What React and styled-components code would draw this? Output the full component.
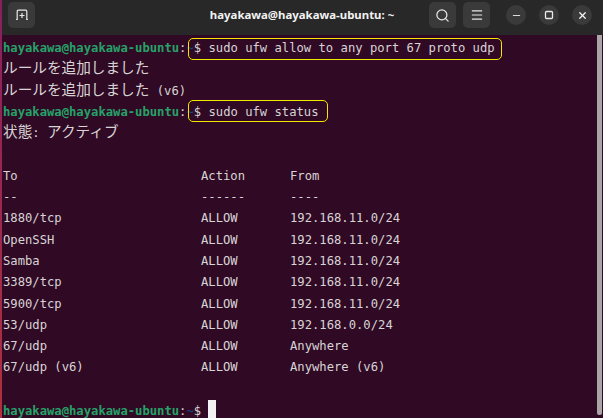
import React from 'react';
import styled, { createGlobalStyle } from 'styled-components';
import { Search, Menu, Minus, X } from 'lucide-react';

const GlobalStyle = createGlobalStyle`
  html, body {
    margin: 0;
    padding: 0;
    background: #ffffff;
  }
`

const Win = styled.div`
  display: flex;
  width: 603px;
  height: 418px;
  overflow: hidden;
  background: #300a24;
`

const Edge = styled.div`
  width: 2px;
  flex-shrink: 0;
  background: linear-gradient(#86205f, #b0303c);
`

const Main = styled.div`
  display: flex;
  flex-direction: column;
  flex: 1;
  min-width: 0;
`

const TitleBar = styled.div`
  display: grid;
  grid-template-columns: 1fr auto 1fr;
  align-items: start;
  height: 35px;
  flex-shrink: 0;
  box-sizing: border-box;
  padding: 2px 11px 0 6px;
  background: #282828;
  color: #f2f2f2;
`

const Group = styled.div`
  display: flex;
  align-items: center;
  justify-content: ${props => props.end ? 'flex-end' : 'flex-start'};
  gap: ${props => props.gap || 0}px;
  margin-right: ${props => props.after || 0}px;
`

const HeadButton = styled.div`
  display: flex;
  align-items: center;
  justify-content: center;
  width: 27px;
  height: 26px;
  border-radius: 5px;
  background: #3a3a3a;
`

const RoundButton = styled.div`
  display: flex;
  align-items: center;
  justify-content: center;
  width: 20px;
  height: 20px;
  border-radius: 50%;
  background: #3a3a3a;
`

const Title = styled.div`
  margin-left: 4px;
  font: bold 11.4px/26px "Noto Sans", "Liberation Sans", sans-serif;
`

const Body = styled.div`
  display: flex;
  flex: 1;
  min-height: 0;
`

const Screen = styled.div`
  flex: 1;
  padding: 3px 0 0 1px;
  font: 12.2px/21.3px "DejaVu Sans Mono", "Noto Sans CJK JP", monospace;
  color: #d8d4d6;
  white-space: pre;
`

const Line = styled.div`
  height: 21.3px;
`

const Jp = styled.span`
  font-family: "Noto Sans CJK JP", sans-serif;
  font-size: 14.65px;
  line-height: 0;
`

const User = styled.span`
  font-weight: bold;
  color: #26a269;
`

const Tilde = styled.span`
  color: #12488b;
`

const Mark = styled.span`
  position: relative;
  display: inline-block;
  height: 21.3px;

  &::after {
    content: "";
    position: absolute;
    left: 2px;
    right: ${props => props.tail}px;
    top: ${props => props.lift}px;
    height: 22px;
    box-sizing: border-box;
    border: 1.3px solid #f5e800;
    border-radius: 5px;
  }
`

const Cursor = styled.span`
  display: inline-block;
  width: 8px;
  height: 21px;
  margin-left: 7px;
  background: #f2f2f2;
  vertical-align: -6px;
`

const Row = styled.div`
  display: grid;
  grid-template-columns: 198px 89px 1fr;
  height: 21.3px;
`

const Scrollbar = styled.div`
  width: 6px;
  flex-shrink: 0;
  padding-bottom: 3px;
  box-sizing: border-box;
`

const Thumb = styled.div`
  width: 5px;
  height: 100%;
  background: #aaa6a8;
  border-radius: 0 0 2px 2px;
`

const Prompt = ({ children }) => (
  <Line>
    <User>hayakawa@hayakawa-ubuntu</User>:{children}
  </Line>
)

const rules = [
  ['To', 'Action', 'From'],
  ['--', '------', '----'],
  ['1880/tcp', 'ALLOW', '192.168.11.0/24'],
  ['OpenSSH', 'ALLOW', '192.168.11.0/24'],
  ['Samba', 'ALLOW', '192.168.11.0/24'],
  ['3389/tcp', 'ALLOW', '192.168.11.0/24'],
  ['5900/tcp', 'ALLOW', '192.168.11.0/24'],
  ['53/udp', 'ALLOW', '192.168.0.0/24'],
  ['67/udp', 'ALLOW', 'Anywhere'],
  ['67/udp (v6)', 'ALLOW', 'Anywhere (v6)'],
]

const App = () => (
  <Win>
    <GlobalStyle />
    <Edge />
    <Main>
      <TitleBar>
        <Group>
          <HeadButton>
            <svg width="14" height="14" viewBox="0 0 14 14" fill="none" stroke="#e8e8e8" strokeWidth="1.2">
              <path d="M1 11.5h1.2V3.2q0-1 1-1h7.6q1 0 1 1v8.3H13" />
              <path d="M7 5v5M4.5 7.5h5" />
            </svg>
          </HeadButton>
        </Group>
        <Title>hayakawa@hayakawa-ubuntu: ~</Title>
        <Group end="true">
          <Group gap={7} after={16}>
            <HeadButton><Search size={15} color="#e8e8e8" /></HeadButton>
            <HeadButton><Menu size={14} color="#e8e8e8" /></HeadButton>
          </Group>
          <Group gap={13}>
            <RoundButton><Minus size={11} color="#e8e8e8" /></RoundButton>
            <RoundButton>
              <svg width="10" height="10" viewBox="0 0 10 10" fill="none" stroke="#e8e8e8" strokeWidth="1.3">
                <rect x="1.5" y="1.5" width="7" height="7" rx="1" />
              </svg>
            </RoundButton>
            <RoundButton><X size={11} color="#f2f2f2" strokeWidth={2.8} /></RoundButton>
          </Group>
        </Group>
      </TitleBar>
      <Body>
        <Screen>
          <Prompt>
            <Mark tail={-7} lift={0}><Tilde>~</Tilde>$ sudo ufw allow to any port 67 proto udp</Mark>
          </Prompt>
          <Line><Jp>ルールを追加しました</Jp></Line>
          <Line><Jp>ルールを追加しました</Jp> (v6)</Line>
          <Prompt>
            <Mark tail={-9} lift={-2}><Tilde>~</Tilde>$ sudo ufw status</Mark>
          </Prompt>
          <Line><Jp>状態</Jp>: <Jp>アクティブ</Jp></Line>
          <Line />
          {rules.map(rule => (
            <Row key={rule.join()}>
              <span>{rule[0]}</span>
              <span>{rule[1]}</span>
              <span>{rule[2]}</span>
            </Row>
          ))}
          <Line />
          <Prompt><Tilde>~</Tilde>$<Cursor /></Prompt>
        </Screen>
        <Scrollbar><Thumb /></Scrollbar>
      </Body>
    </Main>
  </Win>
)

export default App;
